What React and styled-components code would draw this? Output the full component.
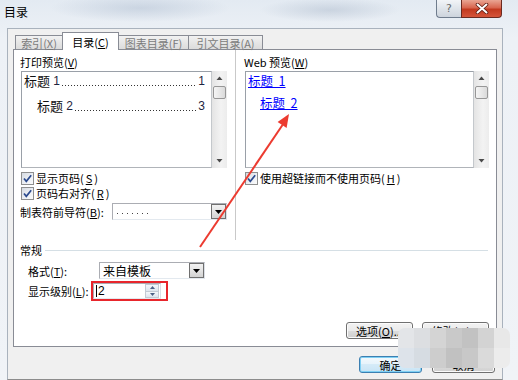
import React from 'react';
import styled, { createGlobalStyle } from 'styled-components';

const Global = createGlobalStyle`
  html, body { margin: 0; padding: 0; }
  body {
    width: 518px; height: 380px; overflow: hidden;
    background: #eef2f7;
    font-family: "Noto Sans CJK SC", "Liberation Sans", sans-serif;
    font-size: 11px; color: #000;
  }
  * { box-sizing: border-box; }
  u { text-decoration: underline; }
`;

const Window = styled.div`
  position: relative;
  width: 518px; height: 380px;
  display: flex; flex-direction: column;
  overflow: hidden;
  background:
    radial-gradient(ellipse 90px 14px at 140px 8px, rgba(170,185,205,0.45), transparent),
    radial-gradient(ellipse 70px 12px at 330px 10px, rgba(160,175,195,0.4), transparent),
    linear-gradient(180deg, #e3eaf2 0%, #edf1f6 10%, #f0f3f7 100%);
`;

const TitleBar = styled.div`
  height: 28px; flex-shrink: 0;
  display: flex; justify-content: space-between; align-items: flex-start;
  padding: 0 16px 0 4px;
`;

const Title = styled.div`
  padding-top: 5px; line-height: 14px; font-size: 12px; color: #000;
`;

const Caption = styled.div`
  display: flex;
`;

const HelpBtn = styled.div`
  width: 25px; height: 18px;
  border: 1px solid #6f7c8d; border-top: none; border-right: none;
  border-bottom-left-radius: 4px;
  background: linear-gradient(180deg, #f2f4f7 0%, #dfe4ea 50%, #cdd4dd 100%);
  display: flex; align-items: center; justify-content: center;
  color: #6a6a6a; font-family: "DejaVu Sans", sans-serif; font-size: 11px; line-height: 1;
`;

const CloseBtn = styled.div`
  width: 41px; height: 18px;
  border: 1px solid #6b2a20; border-top: none;
  border-bottom-right-radius: 4px;
  background: linear-gradient(180deg, #e9a593 0%, #d8664f 45%, #c2391f 55%, #d5553a 100%);
  display: flex; align-items: center; justify-content: center;
`;

const Client = styled.div`
  flex: 1;
  margin-left: 7px; width: 496px;
  background: #f0f0f0;
  border: 1px solid #a9b2bd;
  border-bottom-color: #8c8c8c;
  padding-left: 5px;
  display: flex; flex-direction: column;
`;

const TabRow = styled.div`
  height: 20px; display: flex; align-items: flex-end;
  padding-left: 2px;
`;

const Tab = styled.div`
  width: ${p => p.$w}px;
  height: ${p => (p.$active ? 18 : 14)}px;
  margin-bottom: ${p => (p.$active ? -1 : 0)}px;
  position: relative; z-index: ${p => (p.$active ? 2 : 1)};
  border: 1px solid #898c95; border-bottom: none;
  margin-left: ${p => (p.$first ? 0 : -1)}px;
  background: ${p => (p.$active ? '#ffffff' : 'linear-gradient(180deg, #f2f2f2 0%, #e6e6e6 50%, #dcdcdc 100%)')};
  color: ${p => (p.$active ? '#000' : '#7b7b7b')};
  display: flex; align-items: center; justify-content: center;
  line-height: 12px; font-size: 11px;
  padding-top: ${p => (p.$active ? 0 : 1)}px;
`;

const Panel = styled.div`
  width: 484px; height: 298px;
  border: 1px solid #898c95;
  background: #fff;
  display: flex; flex-direction: column;
  padding: 0 7px 7px 6px;
`;

const Upper = styled.div`
  height: 190px; display: flex;
`;

const Column = styled.div`
  width: ${p => p.$w}px;
  padding-top: 5px;
  display: flex; flex-direction: column;
`;

const Separator = styled.div`
  width: 1px; margin: 0 8px;
  background: #c9c9c9;
`;

const Label = styled.div`
  height: 14px; line-height: 14px; font-size: 11px;
  white-space: nowrap;
`;

const PreviewBox = styled.div`
  margin-top: 2px; margin-left: 1px;
  height: 97px; display: flex;
`;

const ListArea = styled.div`
  flex: 1; min-width: 0;
  border: 1px solid #9aa0a8;
  border-right-color: #c4c8cc; border-bottom-color: #b0b4b9;
  background: #fff;
  padding: 2px 6px 0 2px;
`;

const TocRow = styled.div`
  display: flex; align-items: flex-end;
  height: 14px; line-height: 14px;
  margin-top: ${p => p.$mt}px;
  padding-left: ${p => p.$indent}px;
  font-size: 13px; color: #111;
`;

const Leader = styled.span`
  flex: 1; height: 14px; margin: 0 1px 0 2px;
  background-image: linear-gradient(90deg, #333 1px, transparent 1px);
  background-size: 3px 1px; background-repeat: repeat-x;
  background-position: left bottom 2px;
`;

const Num = styled.span`
  font-family: "Liberation Sans", sans-serif; font-size: 12px; color: #1e2540;
`;

const LinkRow = styled.div`
  height: 14px; line-height: 14px;
  margin-top: ${p => p.$mt}px;
  padding-left: ${p => p.$indent}px;
  font-size: 12.5px;
  color: #0000ff; text-decoration: underline;
  white-space: nowrap;
`;

const Scroll = styled.div`
  width: 15px; height: 97px;
  display: flex; flex-direction: column;
  background: linear-gradient(90deg, #e4e4e4 0%, #f3f3f3 60%, #ececec 100%);
`;

const ScrollArrow = styled.div`
  height: 14px; display: flex; align-items: center; justify-content: center;
`;

const Thumb = styled.div`
  height: 13px; margin: 1px 1px 0;
  border: 1px solid #979797; border-radius: 2px;
  background: linear-gradient(90deg, #f5f5f5 0%, #e8e8e8 50%, #dadada 100%);
`;

const ScrollGap = styled.div` flex: 1; `;

const CheckRow = styled.label`
  display: flex; align-items: center; gap: 2px;
  height: 13px; line-height: 13px;
  margin-top: ${p => p.$mt}px; margin-left: 1px;
  white-space: nowrap;
`;

const CheckBoxBox = styled.span`
  width: 13px; height: 13px; flex-shrink: 0;
  border: 1px solid #8e8f8f;
  background: linear-gradient(135deg, #d6dbe2 0%, #eef1f5 60%, #fbfbfb 100%);
  display: flex; align-items: center; justify-content: center;
`;

const FieldRow = styled.div`
  display: flex; align-items: center;
  height: ${p => p.$h || 17}px;
  margin-top: ${p => p.$mt}px;
  padding-left: ${p => p.$pl || 0}px;
  justify-content: ${p => (p.$spread ? 'space-between' : 'flex-start')};
`;

const FieldLabel = styled.div`
  width: ${p => (p.$w ? `${p.$w}px` : 'auto')};
  line-height: 14px; white-space: nowrap;
`;

const Combo = styled.div`
  width: ${p => p.$w}px; height: 17px;
  border: 1px solid #abadb3;
  border-right-color: #dbdfe6; border-bottom-color: #e3e9ef;
  background: #fff;
  display: flex; align-items: stretch;
`;

const ComboText = styled.div`
  flex: 1; padding-left: 3px; line-height: 15px; font-size: ${p => p.$fs || 11}px;
  white-space: nowrap; overflow: hidden;
`;

const Dots = styled.div`
  flex: 1; margin: 0 0 0 4px;
  background-image: linear-gradient(90deg, #444 1px, transparent 1px);
  background-position: 0 9px;
  background-size: 5px 1px;
  background-repeat: repeat-x;
  max-width: 34px;
`;

const DropBtn = styled.div`
  width: 15px; margin: 0 0 0 auto;
  border: 1px solid #707070;
  background: linear-gradient(180deg, #f2f2f2 0%, #e4e4e4 50%, #d2d2d2 100%);
  display: flex; align-items: center; justify-content: center;
`;

const GroupHead = styled.div`
  display: flex; align-items: center; gap: 3px;
  height: 14px; line-height: 14px; margin-top: 3px;
`;

const GroupLine = styled.div`
  flex: 1; height: 1px; background: #d5dfe5; margin-right: 1px;
`;

const Highlight = styled.div`
  height: 20px; display: flex; align-items: center;
  border: 2px solid #e8262c;
  padding-right: 5px;
`;

const Spinner = styled.div`
  width: 68px; height: 16px;
  border: 1px solid #abadb3;
  border-right-color: #dbdfe6; border-bottom-color: #e3e9ef;
  background: #fff;
  display: flex; align-items: stretch;
`;

const SpinValue = styled.div`
  flex: 1; display: flex; align-items: center; padding-left: 2px;
  font-family: "Liberation Sans", sans-serif; font-size: 12px; line-height: 14px;
`;

const Caret = styled.span`
  width: 1px; height: 12px; background: #000; margin-right: 1px;
`;

const SpinBtns = styled.div`
  width: 14px; margin-right: 1px; display: flex; flex-direction: column;
`;

const SpinBtn = styled.div`
  flex: 1;
  border: 1px solid #c3cad4;
  background: linear-gradient(180deg, #f4f7fb 0%, #dde5ee 100%);
  display: flex; align-items: center; justify-content: center;
  margin-top: ${p => (p.$down ? -1 : 0)}px;
`;

const ButtonRow = styled.div`
  display: flex; justify-content: flex-end; gap: ${p => p.$gap}px;
  margin-top: ${p => (p.$auto ? 'auto' : `${p.$mt}px`)};
  padding-right: ${p => p.$pr || 0}px;
`;

const PushButton = styled.div`
  width: ${p => p.$w}px; height: 17px;
  border: 1px solid ${p => (p.$default ? '#3c7fb1' : '#707070')};
  border-radius: 3px;
  background: ${p => (p.$default
    ? 'linear-gradient(180deg, #f3f9fd 0%, #e6f3fb 50%, #d5ebf8 50%, #c8e4f5 100%)'
    : 'linear-gradient(180deg, #f2f2f2 0%, #ebebeb 50%, #dddddd 50%, #cfcfcf 100%)')};
  box-shadow: inset 0 0 0 1px ${p => (p.$default ? '#7fd0f4' : '#fbfbfb')};
  display: flex; align-items: center; justify-content: center;
  font-size: 11px; line-height: 14px; white-space: nowrap;
`;

const Overlay = styled.svg`
  position: absolute; left: 0; top: 0; pointer-events: none;
`;

const Mosaic = styled.div`
  position: absolute; left: 398px; top: 328px;
  display: grid; grid-template-columns: repeat(7, 16px); grid-auto-rows: 20px;
  border-radius: 7px; overflow: hidden;
  pointer-events: none;
`;

const Tile = styled.div`
  background: ${p => p.$c};
`;

const Tri = ({ up }) => (
  <svg width="7" height="4" viewBox="0 0 7 4">
    <polygon points={up ? '0,4 7,4 3.5,0' : '0,0 7,0 3.5,4'} fill="#000" />
  </svg>
);

const SmallTri = ({ up }) => (
  <svg width="7" height="4" viewBox="0 0 7 4">
    <polygon points={up ? '0.5,4 6.5,4 3.5,0.5' : '0.5,0 6.5,0 3.5,3.5'} fill="#4a4a4a" />
  </svg>
);

const SpinTri = ({ up }) => (
  <svg width="5" height="3" viewBox="0 0 5 3">
    <polygon points={up ? '0,3 5,3 2.5,0' : '0,0 5,0 2.5,3'} fill="#4d6185" />
  </svg>
);

const Check = () => (
  <CheckBoxBox>
    <svg width="11" height="11" viewBox="0 0 11 11">
      <path d="M2 5.5 L4.3 8.3 L9.2 2.2" fill="none" stroke="#2b4a8e" strokeWidth="1.7" />
    </svg>
  </CheckBoxBox>
);

const VScroll = () => (
  <Scroll>
    <ScrollArrow><SmallTri up /></ScrollArrow>
    <Thumb />
    <ScrollGap />
    <ScrollArrow><SmallTri /></ScrollArrow>
  </Scroll>
);

const Key = ({ k }) => (<>(<u>{k}</u>)</>);

const mosaicColors = [
  '#e3e5e8', '#dcdee1', '#d4d4d4', '#c9c9c9', '#c2c2c2', '#d3d3d3', '#e8e8e8',
  '#dde3ea', '#d6dce2', '#cdcdcd', '#c1c1c1', '#c8c8c8', '#dadada', '#ececec',
];

export default function App() {
  return (
    <>
      <Global />
      <Window>
        <TitleBar>
          <Title>目录</Title>
          <Caption>
            <HelpBtn>?</HelpBtn>
            <CloseBtn>
              <svg width="14" height="11" viewBox="0 0 14 11">
                <path d="M2.5 1.5 L11.5 9.5 M11.5 1.5 L2.5 9.5" stroke="#5a1a10" strokeWidth="3.6" strokeLinecap="round" />
                <path d="M2.5 1.5 L11.5 9.5 M11.5 1.5 L2.5 9.5" stroke="#ffffff" strokeWidth="2" strokeLinecap="round" />
              </svg>
            </CloseBtn>
          </Caption>
        </TitleBar>
        <Client>
          <TabRow>
            <Tab $w={48} $first>索引<Key k="X" /></Tab>
            <Tab $w={57} $active>目录<Key k="C" /></Tab>
            <Tab $w={71}>图表目录<Key k="F" /></Tab>
            <Tab $w={75}>引文目录<Key k="A" /></Tab>
          </TabRow>
          <Panel>
            <Upper>
              <Column $w={207}>
                <Label>打印预览<Key k="V" /></Label>
                <PreviewBox>
                  <ListArea>
                    <TocRow $indent={0} $mt={0}>标题 <Num>&nbsp;1</Num><Leader /><Num>1</Num></TocRow>
                    <TocRow $indent={13} $mt={11}>标题 <Num>&nbsp;2</Num><Leader /><Num>3</Num></TocRow>
                  </ListArea>
                  <VScroll />
                </PreviewBox>
                <CheckRow $mt={4}><Check />显示页码<Key k="S" /></CheckRow>
                <CheckRow $mt={2}><Check />页码右对齐<Key k="R" /></CheckRow>
                <FieldRow $mt={3} $spread>
                  <FieldLabel>制表符前导符<Key k="B" />:</FieldLabel>
                  <Combo $w={115}>
                    <Dots />
                    <DropBtn><Tri /></DropBtn>
                  </Combo>
                </FieldRow>
              </Column>
              <Separator />
              <Column $w={245}>
                <Label>Web 预览<Key k="W" /></Label>
                <PreviewBox>
                  <ListArea>
                    <LinkRow $indent={0} $mt={0}>标题&nbsp;&nbsp;1</LinkRow>
                    <LinkRow $indent={12} $mt={8}>标题&nbsp;&nbsp;2</LinkRow>
                  </ListArea>
                  <VScroll />
                </PreviewBox>
                <CheckRow $mt={4}><Check />使用超链接而不使用页码<Key k="H" /></CheckRow>
              </Column>
            </Upper>
            <GroupHead>常规<GroupLine /></GroupHead>
            <FieldRow $mt={5} $pl={8}>
              <FieldLabel $w={71}>格式<Key k="T" />:</FieldLabel>
              <Combo $w={106}>
                <ComboText $fs={12}>来自模板</ComboText>
                <DropBtn><Tri /></DropBtn>
              </Combo>
            </FieldRow>
            <FieldRow $mt={2} $pl={8} $h={20}>
              <FieldLabel $w={63}>显示级别<Key k="L" />:</FieldLabel>
              <Highlight>
                <Spinner>
                  <SpinValue><Caret />2</SpinValue>
                  <SpinBtns>
                    <SpinBtn><SpinTri up /></SpinBtn>
                    <SpinBtn $down><SpinTri /></SpinBtn>
                  </SpinBtns>
                </Spinner>
              </Highlight>
            </FieldRow>
            <ButtonRow $auto $gap={9}>
              <PushButton $w={67}>选项<Key k="O" />...</PushButton>
              <PushButton $w={67}>修改<Key k="M" />...</PushButton>
            </ButtonRow>
          </Panel>
          <ButtonRow $mt={9} $gap={10} $pr={7}>
            <PushButton $w={63} $default>确定</PushButton>
            <PushButton $w={63}>取消</PushButton>
          </ButtonRow>
        </Client>
        <Mosaic>
          {mosaicColors.map((c, i) => <Tile key={i} $c={c} />)}
        </Mosaic>
        <Overlay width="518" height="380" viewBox="0 0 518 380">
          <line x1="200" y1="247" x2="282.5" y2="125" stroke="#ec3b30" strokeWidth="2" />
          <polygon points="289,114 286.6,128 277.6,122" fill="#ec3b30" />
        </Overlay>
      </Window>
    </>
  );
}
